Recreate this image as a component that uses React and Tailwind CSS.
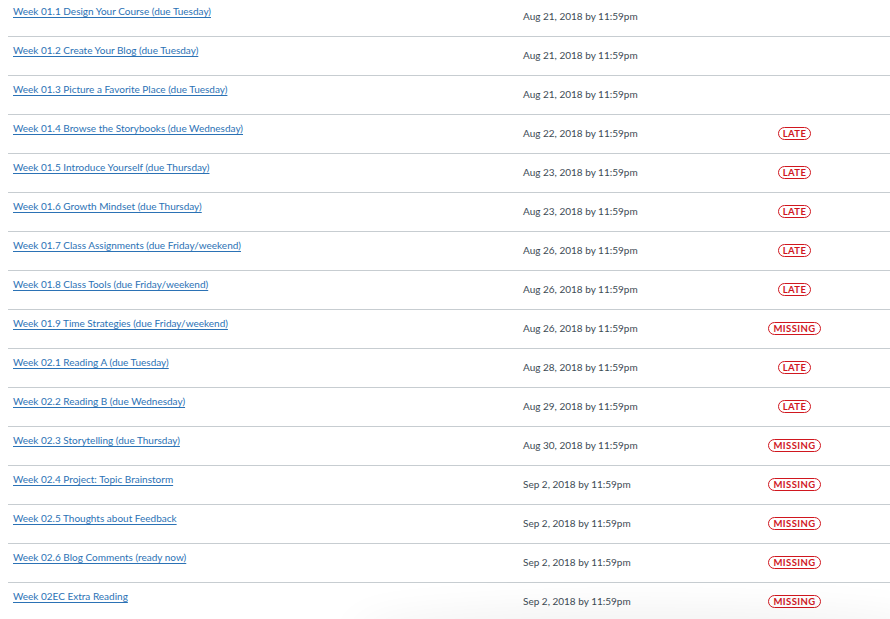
import React from "react";

const rows = [
  ["Week 01.1 Design Your Course (due Tuesday)", "Aug 21, 2018 by 11:59pm", null],
  ["Week 01.2 Create Your Blog (due Tuesday)", "Aug 21, 2018 by 11:59pm", null],
  ["Week 01.3 Picture a Favorite Place (due Tuesday)", "Aug 21, 2018 by 11:59pm", null],
  ["Week 01.4 Browse the Storybooks (due Wednesday)", "Aug 22, 2018 by 11:59pm", "LATE"],
  ["Week 01.5 Introduce Yourself (due Thursday)", "Aug 23, 2018 by 11:59pm", "LATE"],
  ["Week 01.6 Growth Mindset (due Thursday)", "Aug 23, 2018 by 11:59pm", "LATE"],
  ["Week 01.7 Class Assignments (due Friday/weekend)", "Aug 26, 2018 by 11:59pm", "LATE"],
  ["Week 01.8 Class Tools (due Friday/weekend)", "Aug 26, 2018 by 11:59pm", "LATE"],
  ["Week 01.9 Time Strategies (due Friday/weekend)", "Aug 26, 2018 by 11:59pm", "MISSING"],
  ["Week 02.1 Reading A (due Tuesday)", "Aug 28, 2018 by 11:59pm", "LATE"],
  ["Week 02.2 Reading B (due Wednesday)", "Aug 29, 2018 by 11:59pm", "LATE"],
  ["Week 02.3 Storytelling (due Thursday)", "Aug 30, 2018 by 11:59pm", "MISSING"],
  ["Week 02.4 Project: Topic Brainstorm", "Sep 2, 2018 by 11:59pm", "MISSING"],
  ["Week 02.5 Thoughts about Feedback", "Sep 2, 2018 by 11:59pm", "MISSING"],
  ["Week 02.6 Blog Comments (ready now)", "Sep 2, 2018 by 11:59pm", "MISSING"],
  ["Week 02EC Extra Reading", "Sep 2, 2018 by 11:59pm", "MISSING"],
];

const Badge = ({ label }) => (
  <span className="inline-flex items-center h-[13px] px-[4px] rounded-full border border-[#d0171f] text-[#d0171f] text-[9.5px] font-bold leading-none tracking-[0.4px]">
    {label}
  </span>
);

export default function App() {
  return (
    <div className="w-[890px] h-[619px] overflow-hidden bg-white font-['Lato','Noto_Sans',sans-serif] relative">
      <div className="ml-2 -mt-[2px]">
        {rows.map(([title, due, status], i) => (
          <div key={i} className="flex h-[39px] border-b border-[#c7cdd1]">
            <div className="w-[515px] shrink-0 pl-[5px] pt-[7px] text-[10px] leading-[12px]">
              <a href="#" className="text-[#2b72b5] underline underline-offset-[2px]">
                {title}
              </a>
            </div>
            <div className="w-[184px] shrink-0 pt-[12px] text-[10px] leading-[12px] text-[#3d4b55]">{due}</div>
            <div className="w-[175px] shrink-0 flex justify-center items-start pt-[12px]">
              {status && <Badge label={status} />}
            </div>
          </div>
        ))}
      </div>
      <div className="absolute left-[360px] right-[-40px] bottom-[-30px] h-[30px] rounded-[50%] shadow-[0_0_40px_10px_rgba(0,0,0,0.06)]" />
    </div>
  );
}
